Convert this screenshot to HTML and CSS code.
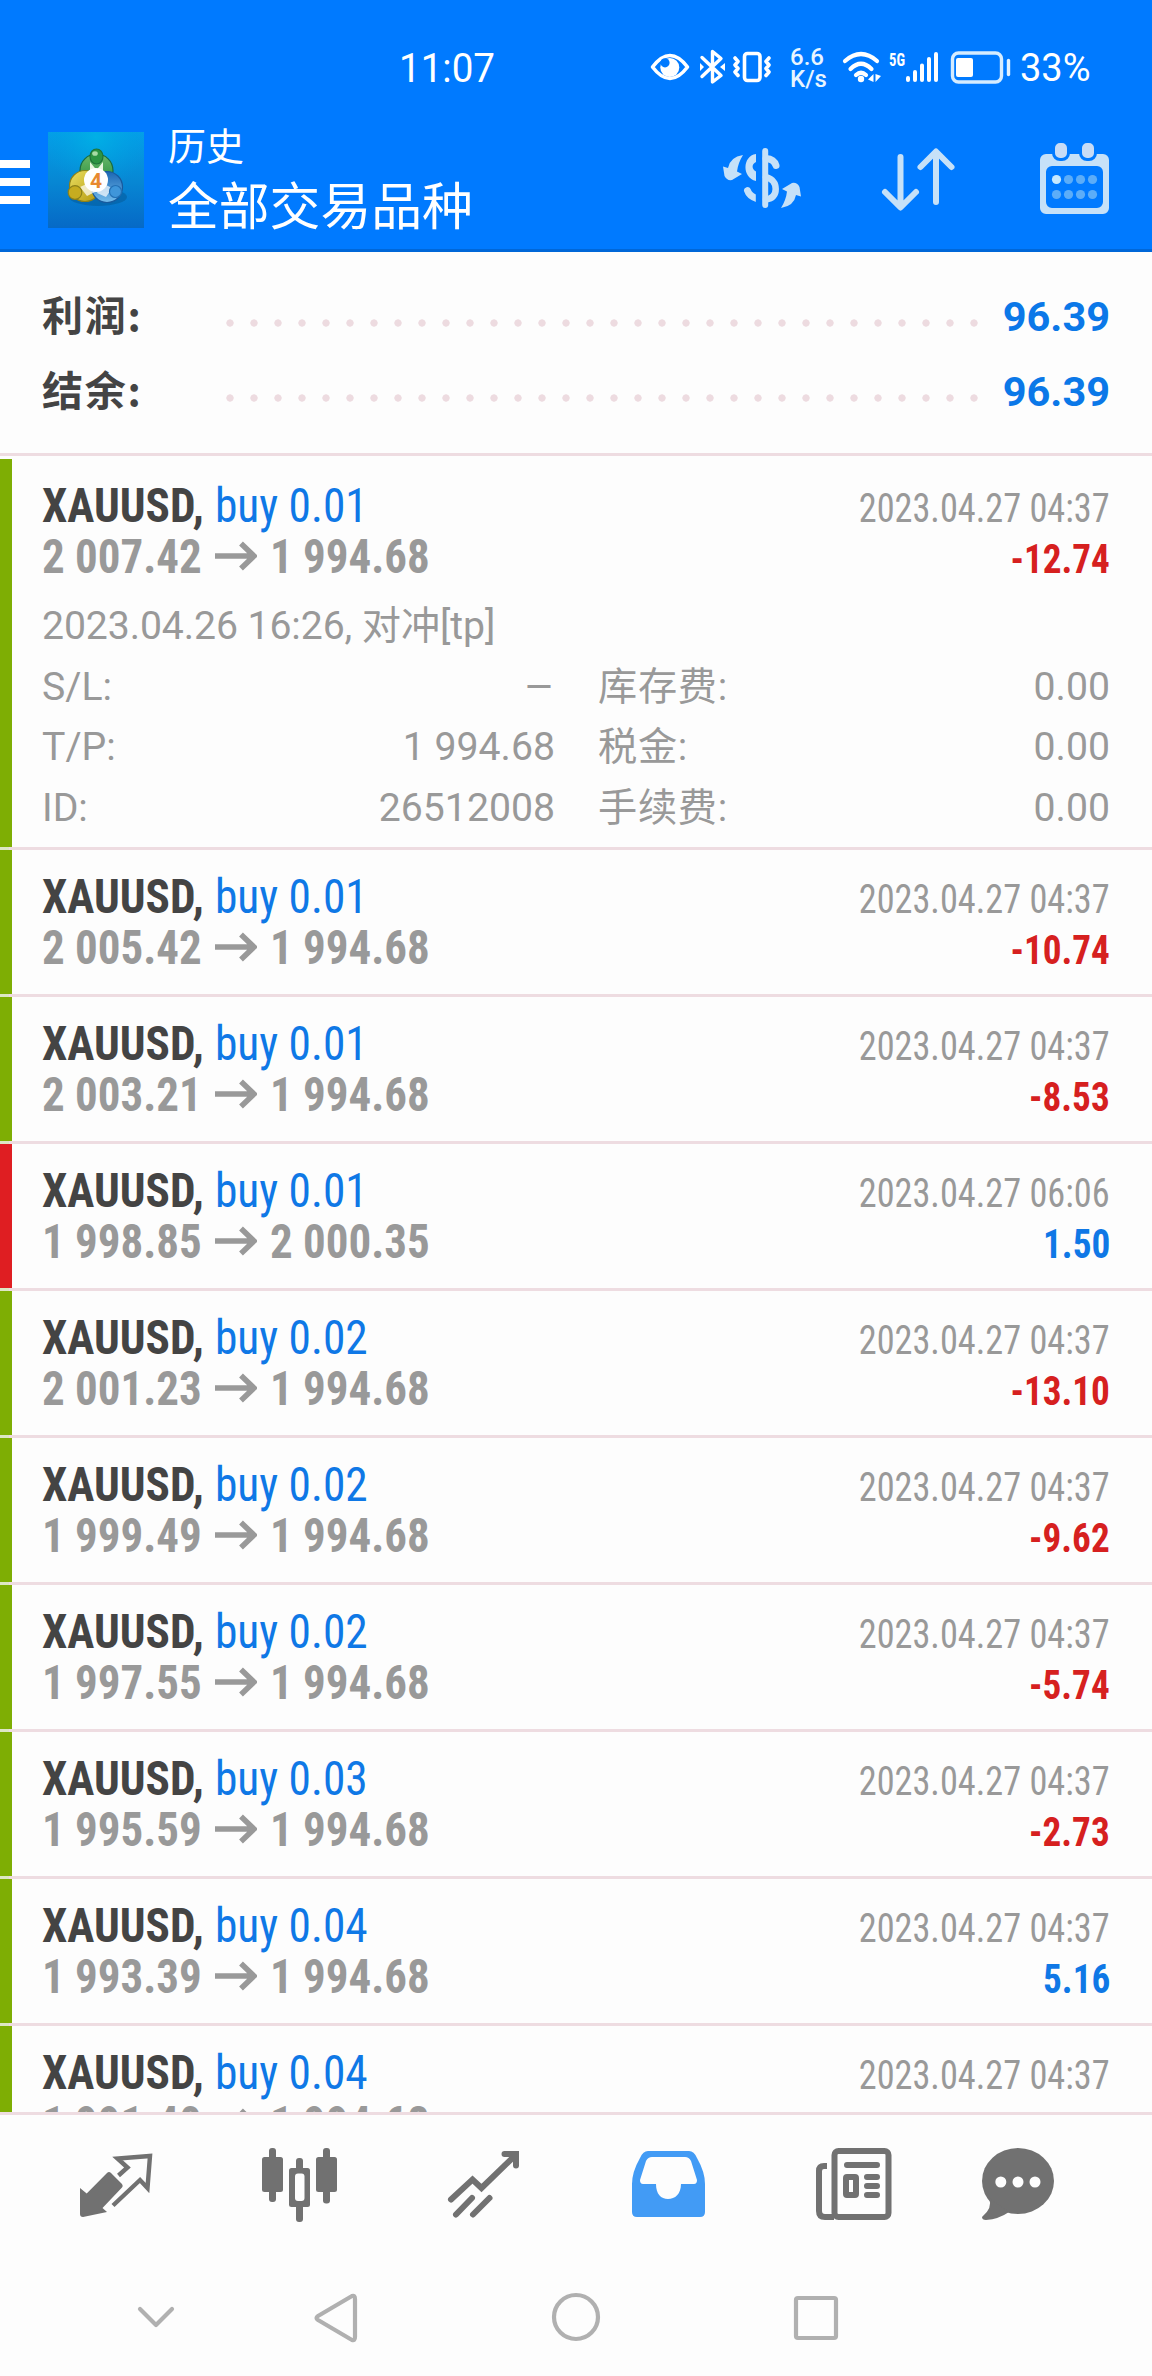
FILE: index.html
```
<!DOCTYPE html>
<html lang="zh-CN">
<head>
<meta charset="utf-8">
<title>历史</title>
<link rel="stylesheet" href="styles.css">
</head>
<body>
<header class="header">
  <div class="status">
    <span class="time">11:07</span>
    <svg class="s-icon" width="50" height="60" viewBox="645 40 50 60"><path d="M652.500 67Q670 44 687.500 67Q670 90 652.500 67z" fill="none" stroke="#fff" stroke-width="3.600" stroke-linejoin="round"/><circle cx="669.800" cy="67.500" r="9.500" fill="#fff"/><circle cx="665" cy="62.800" r="4.600" fill="#007aff"/></svg>
    <svg class="s-icon" width="35" height="60" viewBox="695 40 35 60"><path d="M702 57.500L721 75.500L712.500 82V51.500L721 58.500L702 76.500" fill="none" stroke="#fff" stroke-width="3.400" stroke-linejoin="round" stroke-linecap="round"/><path d="M700 63l4 4-4 4zM725 63l-5 4 5 4z" fill="#fff"/></svg>
    <svg class="s-icon" width="55" height="60" viewBox="730 40 55 60"><g fill="none" stroke="#fff" stroke-width="3.600" stroke-linejoin="round" stroke-linecap="round"><rect x="744.500" y="53.500" width="15.500" height="27" rx="3"/><path d="M735 58l3 3.500-3 3.500 3 3.500-3 3.500 3 3.500M769 58l-3 3.500 3 3.500-3 3.500 3 3.500-3 3.500"/></g></svg>
    <span class="rate"><span>6.6</span><span>K/s</span></span>
    <svg class="s-icon" width="46" height="60" viewBox="839 40 46 60"><g fill="none" stroke="#fff" stroke-width="4.200" stroke-linecap="round"><path d="M845 61Q861 47 877 61M850.500 69Q861 58.500 871.500 69M856 75Q861 70.500 866 75"/></g><circle cx="861" cy="79" r="3.200" fill="#fff"/><path d="M873.500 74v8l-5.500-2.500zM875.500 74v8l5.500-6z" fill="#fff"/></svg>
    <svg class="s-icon" width="61" height="60" viewBox="885 40 61 60"><text class="net" x="889" y="65.500" textLength="16" lengthAdjust="spacingAndGlyphs">5G</text><path d="M908 78v2M915 72v8M922 65.500v14.500M929 59v21M936 54v26" stroke="#fff" stroke-width="4" stroke-linecap="round"/></svg>
    <svg class="s-icon" width="74" height="60" viewBox="946 40 74 60"><rect x="952.500" y="53" width="49" height="29" rx="6" fill="none" stroke="#d5ecff" stroke-width="3.400"/><rect x="956" y="58" width="17" height="19" rx="2" fill="#fff"/><path d="M1008.500 60.500v14" stroke="#e2f2ff" stroke-width="3.400" stroke-linecap="round"/></svg>
    <span class="pct">33%</span>
  </div>
  <div class="toolbar">
    <svg class="menu" width="30" height="120" viewBox="0 118 30 120"><path d="M0 160h30v8H0zM0 178h30v8H0zM0 196h30v8H0z" fill="#fff"/></svg>
    <svg class="logo" width="96" height="96" viewBox="0 0 96 96">
      <defs>
        <linearGradient id="sky" x2="0" y2="1"><stop offset="0" stop-color="#039fe8"/><stop offset=".5" stop-color="#0788d4"/><stop offset="1" stop-color="#0669c6"/></linearGradient>
        <radialGradient id="glow" cx=".5" cy=".05" r=".55"><stop offset="0" stop-color="#00b4e6" stop-opacity=".8"/><stop offset="1" stop-color="#00a0e0" stop-opacity="0"/></radialGradient>
        <linearGradient id="gr" x2="0" y2="1"><stop offset="0" stop-color="#6cb86c"/><stop offset="1" stop-color="#1f8a35"/></linearGradient>
        <linearGradient id="ye" x2="1" y2="1"><stop offset="0" stop-color="#eadf62"/><stop offset="1" stop-color="#b4980c"/></linearGradient>
        <linearGradient id="bl" x2="0" y2="1"><stop offset="0" stop-color="#1b66b4"/><stop offset="1" stop-color="#75bdec"/></linearGradient>
      </defs>
      <rect width="96" height="96" fill="url(#sky)"/><rect width="96" height="96" fill="url(#glow)"/>
      <ellipse cx="50" cy="65" rx="29" ry="9" fill="#04558f" opacity=".45"/>
      <g stroke-width="1.200">
        <circle cx="48.500" cy="38.500" r="16.500" fill="url(#gr)" stroke="#1a6b3e"/>
        <circle cx="37" cy="54" r="15.500" fill="url(#ye)" stroke="#8c8018"/>
        <circle cx="59" cy="55" r="15.500" fill="url(#bl)" stroke="#175a9e"/>
        <path d="M42 30l6.500 8 6.500-8v14H42z" fill="#e9f6df" stroke="none"/>
        <path d="M32 55l11-5 4 10-8 4zM64 56l-10-5-5 10 9 4z" fill="#fff" opacity=".7" stroke="none"/>
        <ellipse cx="48.500" cy="24.500" rx="6.500" ry="7.500" fill="#2d9442" stroke="#1f7338"/>
        <circle cx="27" cy="60.500" r="6.800" fill="#c6ac20" stroke="#8c8018"/>
        <circle cx="67.500" cy="59.500" r="6" fill="#3f96da" stroke="#2270b5"/>
        <ellipse cx="47" cy="21.500" rx="2.800" ry="2.300" fill="#a8dba5" stroke="none"/>
      </g>
      <circle cx="48" cy="48" r="12" fill="#fff"/>
      <text class="four" x="48" y="55.500" text-anchor="middle">4</text>
    </svg>
    <div class="titles"><span class="sub">历史</span><span class="title">全部交易品种</span></div>
    <svg class="tool" width="158" height="120" viewBox="684 118 158 120"><defs><clipPath id="half"><path d="M740 140h15.800v80H740z"/></clipPath></defs><g fill="#c6e1f8"><path d="M743 155Q730 157 728 168L723 166.500L724.500 176Q727 181 732 180L742 174L737 171.500Q738 163 743 155z"/><path d="M781 208Q794 206 796 195L801 196.500L799.500 187Q797 182 792 183L782 189L787 191.500Q786 200 781 208z"/><path d="M756 154C742 156 742 178 756 181V171.500C751.500 169 751.500 164 756 162z"/></g><g fill="none" stroke="#c6e1f8" stroke-width="7" stroke-linecap="round"><path d="M765.200 151V205" stroke-width="6"/><path d="M766 158.500Q774 159 776 165.500"/><path d="M766 177Q775.700 180 775.700 189Q775.700 198 766 199.500" stroke-width="6.500"/><path d="M747.500 190.500Q749.500 197 760 199.500" clip-path="url(#half)"/></g></svg>
    <svg class="tool" width="158" height="120" viewBox="842 118 158 120"><path d="M900.500 157V207M885 192L900.500 207.500L916 192M936 202V152M920.500 167L936 151.500L951.500 167" fill="none" stroke="#c6e1f8" stroke-width="6" stroke-linecap="round" stroke-linejoin="round"/></svg>
    <svg class="tool" width="152" height="120" viewBox="1000 118 152 120"><path fill-rule="evenodd" d="M1046 154h57a6 6 0 0 1 6 6v48a6 6 0 0 1-6 6h-57a6 6 0 0 1-6-6v-48a6 6 0 0 1 6-6zM1052 166a6 6 0 0 0-6 6v30a6 6 0 0 0 6 6h45a6 6 0 0 0 6-6v-30a6 6 0 0 0-6-6z" fill="#c6e1f8"/><g fill="#c8dcf6" stroke="#007aff" stroke-width="3"><rect x="1053.500" y="141.500" width="15" height="18" rx="6.500"/><rect x="1080.500" y="141.500" width="15" height="18" rx="6.500"/></g><circle cx="1056.500" cy="179.500" r="4.600" fill="#c6e9ff"/><g fill="#5cadf8"><circle cx="1068.500" cy="179.500" r="4.600"/><circle cx="1080.500" cy="179.500" r="4.600"/><circle cx="1092.500" cy="179.500" r="4.600"/><circle cx="1056.500" cy="194.500" r="4.600"/><circle cx="1068.500" cy="194.500" r="4.600"/><circle cx="1080.500" cy="194.500" r="4.600"/><circle cx="1092.500" cy="194.500" r="4.600"/></g></svg>
  </div>
</header>

<section class="summary">
  <div class="sum-row"><span class="sum-label">利润:</span><span class="dots"></span><span class="sum-value">96.39</span></div>
  <div class="sum-row"><span class="sum-label">结余:</span><span class="dots"></span><span class="sum-value">96.39</span></div>
</section>

<svg width="0" height="0" class="defs"><symbol id="arrow" viewBox="0 0 42 34"><path d="M0 17H39M26 4.500L39 17L26 29.500" fill="none" stroke="#999" stroke-width="5.500"/></symbol></svg>

<main class="list">
  <article class="deal first">
    <div class="deal-main">
      <div class="left"><div class="line"><b class="sym">XAUUSD,</b><span class="vol">buy 0.01</span></div><div class="line prices"><b>2 007.42</b><svg class="arr"><use href="#arrow"/></svg><b>1 994.68</b></div></div>
      <div class="right"><span class="date">2023.04.27 04:37</span><b class="loss">-12.74</b></div>
    </div>
    <div class="details">
      <div class="wide">2023.04.26 16:26, 对冲[tp]</div>
      <div class="cell"><span>S/L:</span><span class="dash">–</span></div><div class="cell"><span class="fee">库存费:</span><span>0.00</span></div>
      <div class="cell"><span>T/P:</span><span>1 994.68</span></div><div class="cell"><span class="fee">税金:</span><span>0.00</span></div>
      <div class="cell"><span>ID:</span><span>26512008</span></div><div class="cell"><span class="fee">手续费:</span><span>0.00</span></div>
    </div>
  </article>
  <article class="deal"><div class="deal-main"><div class="left"><div class="line"><b class="sym">XAUUSD,</b><span class="vol">buy 0.01</span></div><div class="line prices"><b>2 005.42</b><svg class="arr"><use href="#arrow"/></svg><b>1 994.68</b></div></div><div class="right"><span class="date">2023.04.27 04:37</span><b class="loss">-10.74</b></div></div></article>
  <article class="deal"><div class="deal-main"><div class="left"><div class="line"><b class="sym">XAUUSD,</b><span class="vol">buy 0.01</span></div><div class="line prices"><b>2 003.21</b><svg class="arr"><use href="#arrow"/></svg><b>1 994.68</b></div></div><div class="right"><span class="date">2023.04.27 04:37</span><b class="loss">-8.53</b></div></div></article>
  <article class="deal red"><div class="deal-main"><div class="left"><div class="line"><b class="sym">XAUUSD,</b><span class="vol">buy 0.01</span></div><div class="line prices"><b>1 998.85</b><svg class="arr"><use href="#arrow"/></svg><b>2 000.35</b></div></div><div class="right"><span class="date">2023.04.27 06:06</span><b class="gain">1.50</b></div></div></article>
  <article class="deal"><div class="deal-main"><div class="left"><div class="line"><b class="sym">XAUUSD,</b><span class="vol">buy 0.02</span></div><div class="line prices"><b>2 001.23</b><svg class="arr"><use href="#arrow"/></svg><b>1 994.68</b></div></div><div class="right"><span class="date">2023.04.27 04:37</span><b class="loss">-13.10</b></div></div></article>
  <article class="deal"><div class="deal-main"><div class="left"><div class="line"><b class="sym">XAUUSD,</b><span class="vol">buy 0.02</span></div><div class="line prices"><b>1 999.49</b><svg class="arr"><use href="#arrow"/></svg><b>1 994.68</b></div></div><div class="right"><span class="date">2023.04.27 04:37</span><b class="loss">-9.62</b></div></div></article>
  <article class="deal"><div class="deal-main"><div class="left"><div class="line"><b class="sym">XAUUSD,</b><span class="vol">buy 0.02</span></div><div class="line prices"><b>1 997.55</b><svg class="arr"><use href="#arrow"/></svg><b>1 994.68</b></div></div><div class="right"><span class="date">2023.04.27 04:37</span><b class="loss">-5.74</b></div></div></article>
  <article class="deal"><div class="deal-main"><div class="left"><div class="line"><b class="sym">XAUUSD,</b><span class="vol">buy 0.03</span></div><div class="line prices"><b>1 995.59</b><svg class="arr"><use href="#arrow"/></svg><b>1 994.68</b></div></div><div class="right"><span class="date">2023.04.27 04:37</span><b class="loss">-2.73</b></div></div></article>
  <article class="deal"><div class="deal-main"><div class="left"><div class="line"><b class="sym">XAUUSD,</b><span class="vol">buy 0.04</span></div><div class="line prices"><b>1 993.39</b><svg class="arr"><use href="#arrow"/></svg><b>1 994.68</b></div></div><div class="right"><span class="date">2023.04.27 04:37</span><b class="gain">5.16</b></div></div></article>
  <article class="deal"><div class="deal-main"><div class="left"><div class="line"><b class="sym">XAUUSD,</b><span class="vol">buy 0.04</span></div><div class="line prices"><b>1 991.40</b><svg class="arr"><use href="#arrow"/></svg><b>1 994.68</b></div></div><div class="right"><span class="date">2023.04.27 04:37</span></div></div></article>
</main>

<nav class="tabs">
  <svg viewBox="24 2115 184 140"><path d="M80 2188L86.700 2193.500L107 2173Q109 2171 111 2173L122 2184Q123.500 2186 122 2187.500L102.500 2208L107 2212L83 2217Q80 2217 80 2214z" fill="#717171"/><path d="M118.500 2175.500L127.500 2167.500L117.500 2158.500L150 2156L147.500 2188L140 2180L113 2205.500" fill="none" stroke="#717171" stroke-width="4.400"/></svg>
  <svg viewBox="208 2115 184 140"><g fill="#717171"><rect x="262" y="2157" width="21" height="35" rx="2.500"/><rect x="269" y="2148" width="7" height="54" rx="3"/><rect x="316" y="2157" width="21" height="35" rx="2.500"/><rect x="323" y="2148" width="7" height="55.500" rx="3"/><rect x="296" y="2158" width="7" height="64" rx="3"/><rect x="289" y="2168" width="21" height="39" rx="2.500"/></g><rect x="295" y="2173.500" width="9.500" height="27.500" rx="3" fill="#fdfdfd"/></svg>
  <svg viewBox="392 2115 184 140"><path d="M451 2199.500L472.500 2179.500L481.500 2188L515.500 2155M504.500 2154H516V2165.500" fill="none" stroke="#717171" stroke-width="6" stroke-linecap="round"/><path d="M456 2214.500L472 2198M473 2214.500L489.500 2198" fill="none" stroke="#717171" stroke-width="6" stroke-linecap="round"/></svg>
  <svg viewBox="576 2115 184 140"><path fill-rule="evenodd" fill="#429bf5" d="M648 2151H689Q694 2151 697 2158Q705 2172 705 2184V2212Q705 2217 700 2217H637Q632 2217 632 2212V2184Q632 2172 640 2158Q643 2151 648 2151zM652 2157Q648 2157 646 2161L640 2180Q640 2184 643 2184H656C656 2194 661 2199 668 2199C675 2199 681 2194 681 2184H694Q697 2184 697 2180L691 2161Q689 2157 685 2157z"/></svg>
  <svg viewBox="760 2115 184 140"><g fill="none" stroke="#717171" stroke-width="6"><rect x="834.500" y="2151" width="54" height="66" rx="4"/><path d="M827 2166H824Q819 2166 819 2171V2211Q819 2217 825 2217H834"/></g><g stroke="#717171" stroke-width="6" stroke-linecap="round"><path d="M847 2165H877M867 2177H877M867 2186H877M867 2195H877"/></g><rect x="846" y="2177" width="10" height="18" rx="1" fill="none" stroke="#717171" stroke-width="6"/></svg>
  <svg viewBox="944 2115 184 140"><ellipse cx="1018" cy="2181" rx="36" ry="33" fill="#717171"/><path d="M989 2198Q993 2208 982 2217Q982 2220 986 2220Q999 2219 1009 2212z" fill="#717171"/><g fill="#fdfdfd"><circle cx="1000.800" cy="2182" r="5.500"/><circle cx="1018" cy="2182" r="5.500"/><circle cx="1035" cy="2182" r="5.500"/></g></svg>
</nav>
<footer class="sysnav">
  <svg width="160" height="80" viewBox="76 2278 160 80"><path d="M140 2309L156 2325L172 2309"/></svg>
  <svg width="200" height="80" viewBox="236 2278 200 80"><path d="M352 2296Q355 2295 355 2299V2337Q355 2341 352 2340L318 2320Q315 2318 318 2316z"/></svg>
  <svg width="280" height="80" viewBox="436 2278 280 80"><circle cx="576" cy="2317" r="22"/></svg>
  <svg width="200" height="80" viewBox="716 2278 200 80"><rect x="796" y="2298" width="40" height="40" rx="2"/></svg>
</footer>
</body>
</html>
```
FILE: styles.css
```
* { box-sizing: border-box; }
body { margin: 0; width: 1152px; height: 2376px; overflow: hidden; background: #fdfdfd; font-family: Roboto, "Noto Sans CJK SC", sans-serif; display: flex; flex-direction: column; }
svg { display: block; flex: none; }
b { font-weight: 700; }
.defs { display: none; }

.header { height: 252px; flex: none; background: #007aff; border-bottom: 3px solid #0067d8; color: #fff; }
.status { height: 118px; padding: 40px 0 0 399px; display: flex; align-items: flex-start; }
.time { width: 246px; font-size: 41px; font-weight: 450; line-height: 56px; transform: scaleX(.94); transform-origin: left; }
.rate { width: 54px; padding: 6px 0 0 5px; display: flex; flex-direction: column; font-size: 24px; font-weight: 500; line-height: 22px; color: #e8f5ff; }
.net { font: 700 19px "Roboto Condensed", Roboto, sans-serif; fill: #fff; }
.pct { font-size: 38px; font-weight: 400; line-height: 56px; }
.toolbar { height: 131px; display: flex; align-items: flex-start; }
.logo { margin: 13.500px 24px 0 18px; }
.titles { width: 516px; display: flex; flex-direction: column; }
.sub { font-size: 38px; line-height: 58px; }
.title { font-size: 50.800px; line-height: 64px; }
.four { font: 700 21px Roboto, sans-serif; fill: #e8892f; }

.summary { height: 204px; flex: none; border-bottom: 3px solid #eedce1; padding: 27px 42px 0 42px; }
.sum-row { height: 75px; display: flex; align-items: center; font-size: 41.500px; font-weight: 700; line-height: 75px; }
.sum-label { width: 176px; color: #444; font-family: "Noto Sans CJK SC", sans-serif; font-size: 41px; letter-spacing: 1.800px; margin-top: -7px; }
.dots { width: 768px; height: 24px; margin-top: 13px; background: radial-gradient(circle 4px at 12px 12px, #eddbe0 3.300px, transparent 4px) 0 0 / 24px 24px; }
.sum-value { flex: 1; text-align: right; color: #0b78e8; }

.list { height: 1656px; flex: none; overflow: hidden; }
.deal { border-bottom: 3px solid #eedce1; border-image: linear-gradient(90deg, #dde7c4 12px, #eedce1 12px) 3; height: 147px; border-width: 0 0 3px; padding: 21px 42px 0 42px; background: linear-gradient(#7eae04, #7eae04) 0 0 / 12px 100% no-repeat; background-clip: padding-box; }
.deal.red { background-image: linear-gradient(#df1e22, #df1e22); }
.deal.first { height: 391px; margin-top: 3px; }
.deal-main { display: flex; justify-content: space-between; height: 102px; font-family: "Roboto Condensed", Roboto, sans-serif; line-height: 51px; }
.line { display: flex; height: 51px; font-size: 48px; white-space: nowrap; }
.sym { width: 173px; color: #444; transform: scaleX(.942); transform-origin: left; }
.vol { color: #0f78e6; transform: scaleX(.945); transform-origin: left; }
.prices b { color: #999; width: 173px; transform: scaleX(.937); transform-origin: left; }
.arr { width: 42px; height: 34px; margin: 8px 13px 0 0; }
.right { display: flex; flex-direction: column; align-items: flex-end; padding-top: 3px; font-size: 40px; }
.date { color: #999; transform: scaleX(.907); transform-origin: right; }
.loss { color: #d6201f; transform: scaleX(.93); transform-origin: right; }
.gain { color: #0f78e6; transform: scaleX(.93); transform-origin: right; }
.details { margin-top: 14px; display: grid; grid-template-columns: 513px 512px; column-gap: 43px; font-size: 39.200px; line-height: 60.600px; color: #999; }
.wide { grid-column: 1 / 3; letter-spacing: -.1px; }
.cell { display: flex; justify-content: space-between; }
.dash { transform: scaleX(1.2); transform-origin: right; }
.fee { letter-spacing: .7px; }

.tabs { height: 143px; flex: none; border-top: 3px solid #eedce1; padding: 0 24px; display: grid; grid-template-columns: repeat(6, 184px); }
.tabs svg { width: 184px; height: 140px; }
.sysnav { flex: 1; padding: 23px 0 0 76px; display: flex; }
.sysnav path, .sysnav circle, .sysnav rect { fill: none; stroke: #b0b0b0; stroke-width: 4.200; stroke-linejoin: round; stroke-linecap: round; }
```
